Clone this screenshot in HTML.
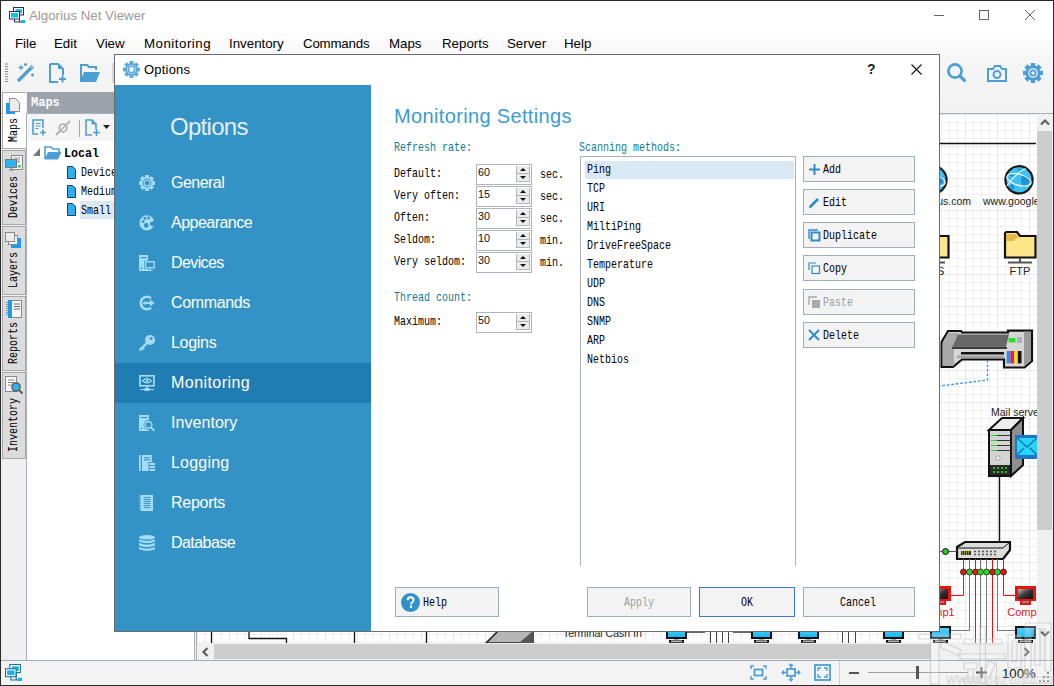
<!DOCTYPE html>
<html><head><meta charset="utf-8">
<style>
*{margin:0;padding:0;box-sizing:border-box}
html,body{width:1054px;height:686px;overflow:hidden;background:#fff}
body{position:relative;font-family:"Liberation Sans",sans-serif;font-size:13px;color:#000}
.a{position:absolute}
svg{position:absolute;overflow:visible}
.mono{font-family:"Liberation Mono",monospace;font-size:12px;letter-spacing:-1.2px;white-space:pre}
#top{left:0;top:0;width:1054px;height:113px;background:linear-gradient(#fff 0px,#fff 28px,#f5f5f5 62px,#f2f2f2 112px)}
.menu span{position:absolute;top:36px;font-size:13.3px;color:#000;line-height:16px}
#tbline{left:0;top:113px;width:1054px;height:1px;background:#a7b2bf}
#strip{left:0;top:114px;width:27px;height:547px;background:#f0f0f0;border-right:1px solid #a9b0b8}
.tab{position:absolute;left:2px;width:24px;background:#dcdcdc;border:1px solid #a8a8a8}
.tab.sel{background:#fff}
.vt{position:absolute;font-family:"Liberation Mono",monospace;font-size:13px;line-height:14px;white-space:pre;transform-origin:0 0;transform:rotate(-90deg) scaleX(0.769)}
#tree{left:27px;top:114px;width:167px;height:546px;background:#fff}
#mapshdr{left:27px;top:92px;width:170px;height:21px;background:#9ca3ab}
#canvas{left:197px;top:114px;width:840px;height:529px;background-color:#fff;
 background-image:linear-gradient(90deg,#e9e9e9 1px,transparent 1px),linear-gradient(#e9e9e9 1px,transparent 1px),linear-gradient(90deg,#f2f2f2 1px,transparent 1px),linear-gradient(#f2f2f2 1px,transparent 1px);
 background-size:32px 32px,32px 32px,8px 8px,8px 8px;background-position:0px 0px;overflow:hidden}
#status{left:0;top:660px;width:1054px;height:26px;background:#f3f3f3;border-top:1px solid #9fabb8}
#dlg{left:114px;top:54px;width:826px;height:578px;border:1px solid #6b6b6b;background:#fff}
#side{left:0;top:30px;width:256px;height:546px;background:#3393c7}
.nav{position:absolute;left:0;width:256px;height:40px;color:#fff;font-size:16px;letter-spacing:-0.45px}
.nav span{position:absolute;left:56px;top:11px;line-height:18px}
.nav.sel{background:#1f7db3}
.nav svg{left:24px;top:12px}
.btn{position:absolute;background:#f3f3f3;border:1px solid #a3acb9}
.lbl{position:absolute;font-family:"Liberation Mono",monospace;font-size:13px;white-space:pre;line-height:14px;transform:scaleX(0.769);transform-origin:0 0}
.teal{color:#0c7d8e}
.spin{position:absolute;left:361px;width:56px;height:21px;border:1px solid #aeb4bb;background:#fff}
.spin b{position:absolute;left:1px;top:1px;font-weight:normal;font-size:10.8px;line-height:12px;color:#111}
.spin i{position:absolute;left:39px;top:1px;width:14px;height:16px;background:linear-gradient(#ececec 0,#ececec 7px,#b4b4b4 7px,#b4b4b4 8px,#ececec 8px);border:1px solid #b8b8b8;border-top:none}
.spin i:before{content:"";position:absolute;left:3px;top:2px;border-left:3px solid transparent;border-right:3px solid transparent;border-bottom:3px solid #111}
.spin i:after{content:"";position:absolute;left:3px;top:10px;border-left:3px solid transparent;border-right:3px solid transparent;border-top:3px solid #111}
.spin i b{display:none}
</style></head><body>
<!-- ========== MAIN WINDOW ========== -->
<div id="top" class="a"></div>
<!-- app icon -->
<svg style="left:9px;top:7px" width="16" height="16" viewBox="0 0 16 16">
 <rect x="4.5" y="0.5" width="10" height="7.5" fill="#fff" stroke="#3e1f6a" stroke-width="1"/>
 <rect x="6.5" y="2.2" width="6.5" height="4.2" fill="#00c6e6"/>
 <rect x="0.5" y="4.5" width="10" height="7.5" fill="#fff" stroke="#3e1f6a" stroke-width="1"/>
 <rect x="2" y="6" width="7" height="4.5" fill="#00c6e6"/>
 <path d="M5.5 12v3h8M10.5 8v7" fill="none" stroke="#3e1f6a" stroke-width="1"/>
 <rect x="12" y="13" width="4" height="3" fill="#00c6e6"/>
</svg>
<div class="a" style="left:29px;top:8px;color:#9a9a9a;font-size:13.3px;line-height:16px">Algorius Net Viewer</div>
<!-- window controls -->
<svg style="left:934px;top:10px" width="102" height="11">
 <path d="M0 5.5h10" stroke="#666" stroke-width="1"/>
 <rect x="45.5" y="0.5" width="9" height="9" fill="none" stroke="#666" stroke-width="1"/>
 <path d="M91 0l10 10M101 0l-10 10" stroke="#666" stroke-width="1"/>
</svg>
<div class="menu">
 <span style="left:15px">File</span><span style="left:54px">Edit</span><span style="left:96px">View</span><span style="left:144px;letter-spacing:0.5px">Monitoring</span><span style="left:229px">Inventory</span><span style="left:303px;letter-spacing:-0.2px">Commands</span><span style="left:389px">Maps</span><span style="left:442px">Reports</span><span style="left:507px">Server</span><span style="left:564px">Help</span>
</div>
<!-- toolbar left -->
<svg style="left:5px;top:63px" width="4" height="20"><path d="M0 1h3M0 3.5h3M0 6h3M0 8.5h3M0 11h3M0 13.5h3M0 16h3M0 18.5h3" stroke="#8a8a8a" stroke-width="1"/></svg>
<svg style="left:16px;top:63px" width="21" height="20" viewBox="0 0 21 20">
 <path d="M2 18L17 3" stroke="#4a9fd5" stroke-width="3.2"/>
 <path d="M15 5l2-2" stroke="#fff" stroke-width="1"/>
 <path d="M2.5 4.5h5M5 2v5M8 1.5h3M9.5 0v3M15 12h3M16.5 10.5v3" stroke="#4a9fd5" stroke-width="1.3"/>
</svg>
<svg style="left:49px;top:63px" width="18" height="20" viewBox="0 0 18 20">
 <path d="M1 1h8l5 5v6M9 19H1V1" fill="none" stroke="#4a9fd5" stroke-width="2"/>
 <path d="M9 1v5h5z" fill="#4a9fd5"/>
 <path d="M10 16h7M13.5 12.5v7" stroke="#4a9fd5" stroke-width="2"/>
</svg>
<svg style="left:80px;top:64px" width="20" height="18" viewBox="0 0 20 18">
 <path d="M1 17V1h6l2 2h7v3" fill="none" stroke="#4a9fd5" stroke-width="2"/>
 <path d="M0 18L4 8h16l-4 10z" fill="#4a9fd5"/>
</svg>
<div class="a" style="left:112px;top:63px;width:3px;height:20px;background:#d8d8d8"></div>
<!-- toolbar right -->
<svg style="left:947px;top:63px" width="20" height="20" viewBox="0 0 20 20">
 <circle cx="8" cy="8" r="6.6" fill="none" stroke="#4a9fd5" stroke-width="2.6"/>
 <path d="M12.6 12.6l5.8 5.8" stroke="#4a9fd5" stroke-width="3.2"/>
</svg>
<svg style="left:987px;top:65px" width="20" height="17" viewBox="0 0 20 17">
 <path d="M1 4h5l2-3h5l2 3h4v12H1z" fill="none" stroke="#4a9fd5" stroke-width="2"/>
 <circle cx="10" cy="9.5" r="3.5" fill="none" stroke="#4a9fd5" stroke-width="2"/>
</svg>
<svg style="left:1023px;top:63px" width="20" height="20" viewBox="0 0 20 20">
 <g fill="#4a9fd5"><rect x="7.8" y="0" width="4.4" height="20"/><rect x="0" y="7.8" width="20" height="4.4"/>
 <rect x="7.8" y="0" width="4.4" height="20" transform="rotate(45 10 10)"/><rect x="7.8" y="0" width="4.4" height="20" transform="rotate(-45 10 10)"/></g>
 <circle cx="10" cy="10" r="7.4" fill="#4a9fd5"/>
 <circle cx="10" cy="10" r="4.8" fill="#f3f3f3"/>
 <circle cx="10" cy="10" r="3.6" fill="#4a9fd5"/>
 <circle cx="10" cy="10" r="1.8" fill="#f3f3f3"/>
</svg>
<div id="tbline" class="a"></div>

<!-- canvas -->
<div id="canvas" class="a">
<svg style="left:0;top:0" width="840" height="529" viewBox="0 0 840 529">
<defs><linearGradient id="scr" x1="0" y1="0" x2="1" y2="1"><stop offset="0" stop-color="#bbb"/><stop offset="0.5" stop-color="#333"/><stop offset="1" stop-color="#111"/></linearGradient><linearGradient id="mon" x1="0" y1="0" x2="0" y2="1"><stop offset="0" stop-color="#4fd4ff"/><stop offset="1" stop-color="#17b8ef"/></linearGradient></defs>
<path d="M600 29.5H839" stroke="#111" stroke-width="1.6"/>
<circle cx="736" cy="65.8" r="13.6" fill="#3cc3f4" stroke="#1a1a1a" stroke-width="2.2"/><path d="M738 63.8c2-3 6-3 8 0 1 3 0 6-3 8-2 1-4-1-5-3zM728 69.8c2 0 4 2 3 5-1 1-3 1-4-1zM734 54.8c3-1 6 0 6 2-2 1-4 1-6-2zM726 60.8c2-2 4-1 5 1-2 1-4 1-5-1z" fill="#2390d6"/><ellipse cx="736" cy="65.8" rx="12.5" ry="5.5" fill="none" stroke="#fff" stroke-width="1.1" transform="rotate(15 736 65.8)"/><path d="M724 71.8C730 62.8 738 55.8 743 54.8" fill="none" stroke="#fff" stroke-width="1.1"/>
<circle cx="822" cy="65.8" r="13.6" fill="#3cc3f4" stroke="#1a1a1a" stroke-width="2.2"/><path d="M824 63.8c2-3 6-3 8 0 1 3 0 6-3 8-2 1-4-1-5-3zM814 69.8c2 0 4 2 3 5-1 1-3 1-4-1zM820 54.8c3-1 6 0 6 2-2 1-4 1-6-2zM812 60.8c2-2 4-1 5 1-2 1-4 1-5-1z" fill="#2390d6"/><ellipse cx="822" cy="65.8" rx="12.5" ry="5.5" fill="none" stroke="#fff" stroke-width="1.1" transform="rotate(15 822 65.8)"/><path d="M810 71.8C816 62.8 824 55.8 829 54.8" fill="none" stroke="#fff" stroke-width="1.1"/>
<text x="774" y="91" font-family="Liberation Sans" font-size="10.5" text-anchor="end" fill="#222">www.algorius.com</text>
<text x="786" y="91" font-family="Liberation Sans" font-size="10.5" fill="#222">www.google.com</text>
<path d="M721 120q0-2 2-2h10l3 4h15.5v21.5h-30.5z" fill="#fde68a" stroke="#111" stroke-width="2.2"/><path d="M722 120h10l3 4h-3l-2 3h-8z" fill="#e3b94e"/><path d="M736 144v4M724 148.5h24" stroke="#555" stroke-width="2"/>
<path d="M808 120q0-2 2-2h10l3 4h15.5v21.5h-30.5z" fill="#fde68a" stroke="#111" stroke-width="2.2"/><path d="M809 120h10l3 4h-3l-2 3h-8z" fill="#e3b94e"/><path d="M823 144v4M811 148.5h24" stroke="#555" stroke-width="2"/>
<text x="736" y="161" font-family="Liberation Sans" font-size="11" text-anchor="middle" fill="#222">NAS</text>
<text x="823" y="161" font-family="Liberation Sans" font-size="11" text-anchor="middle" fill="#222">FTP</text>
<path d="M744.6 253V228L751 217H764L765 218.5H811V216.6H835V247L827.5 253.5H807V245.5H765L756 253z" fill="#d6d6d6" stroke="#111" stroke-width="2.2"/>
<path d="M745.5 252V230L751 219H762L757 228V252z" fill="#a9a9a9"/>
<path d="M760.8 220.5H812L809 232.7H755.5z" fill="#676767"/>
<path d="M755 232.7H810V235H755z" fill="#3d3d3d"/>
<path d="M764 238H807V240.5H764z" fill="#111"/><path d="M760 241.5H807V244H760z" fill="#a4a4a4"/>
<path d="M827 217.5L834 217.5V246L827 252z" fill="#9a9a9a"/>
<rect x="811.5" y="224" width="7" height="4.4" fill="#22e622"/>
<path d="M820 224h5M820 226h5M820 228h5" stroke="#888" stroke-width="1"/>
<path d="M809.7 237h3.7v12.4h-3.7z" fill="#1a9ae0"/><path d="M813.4 237h3.7v12.4h-3.7z" fill="#e0157a"/><path d="M817.1 237h3.7v12.4h-3.7z" fill="#ffe000"/><path d="M820.8 237h3.7v12.4h-3.7z" fill="#111"/>
<path d="M790.5 246V266L600 290" fill="none" stroke="#1e90ff" stroke-width="1.3" stroke-dasharray="2.5 2"/>
<text x="794" y="301.5" font-family="Liberation Sans" font-size="10.5" fill="#222">Mail server</text>
<path d="M792 316l13-12h21l-12 12z" fill="#ededed" stroke="#111" stroke-width="2"/>
<path d="M814 316l12-12v47l-12 11z" fill="#8f8f8f" stroke="#111" stroke-width="2"/>
<rect x="792" y="316" width="22" height="46" fill="#d4d4d4" stroke="#111" stroke-width="2"/>
<path d="M794 321.5h20M794 326.5h20M794 331.5h20M794 336.5h20" stroke="#333" stroke-width="1"/>
<path d="M794 321.5h6M794 326.5h6M794 331.5h6M794 336.5h6" stroke="#22dd22" stroke-width="1"/>
<circle cx="801" cy="344" r="2.2" fill="#eee" stroke="#999" stroke-width="0.8"/>
<rect x="793" y="351" width="20" height="10" fill="#2a2a2a"/>
<path d="M796 354h2M800 354h2M804 354h2M808 354h2M796 358h2M800 358h2M804 358h2M808 358h2" stroke="#22ee22" stroke-width="1.6"/>
<rect x="818" y="321" width="22" height="24" fill="#1b76c4"/><rect x="820" y="324" width="20" height="17" fill="#23d6f5"/>
<path d="M820 324l10 9 10-9M820 341l7-7M840 341l-7-7" fill="none" stroke="#1b76c4" stroke-width="1.6"/>
<path d="M802.5 362V429" stroke="#111" stroke-width="1.4"/>
<path d="M760 433l8-5h45v8l-7 9h-46z" fill="#dcdcdc" stroke="#111" stroke-width="2.2"/>
<path d="M760 434h46l7-6" fill="none" stroke="#111" stroke-width="1"/>
<path d="M764 437h10v4h-10z" fill="#333"/><path d="M765 438h1M767 438h1M769 438h1M771 438h1M765 440h1M767 440h1M769 440h1M771 440h1" stroke="#dede22" stroke-width="1"/>
<path d="M777 437.5h2M781 437.5h2M785 437.5h2M789 437.5h2M793 437.5h2M797 437.5h2M777 440.5h2M781 440.5h2M785 440.5h2M789 440.5h2M793 440.5h2M797 440.5h2" stroke="#555" stroke-width="1.6"/>
<path d="M600 437.5H760" stroke="#555" stroke-width="1"/>
<circle cx="748.5" cy="437.5" r="3" fill="#22cc22" stroke="#111" stroke-width="1"/>
<path d="M766.5 445V481.5H742" fill="none" stroke="#ee1111" stroke-width="1"/>
<path d="M806.5 445V481.5H818" fill="none" stroke="#ee1111" stroke-width="1"/>
<path d="M772.5 445V516.5H600" fill="none" stroke="#777" stroke-width="1"/>
<path d="M800.5 445V516.5H839" fill="none" stroke="#777" stroke-width="1"/>
<path d="M778.5 445V529" stroke="#ee1111" stroke-width="1"/>
<path d="M795.5 445V529" stroke="#ee1111" stroke-width="1"/>
<path d="M783.5 445V529" stroke="#777" stroke-width="1"/>
<path d="M789.5 445V529" stroke="#777" stroke-width="1"/>
<circle cx="766.5" cy="458" r="3" fill="#ee1111" stroke="#222" stroke-width="0.8"/>
<circle cx="772.5" cy="458" r="3" fill="#22dd22" stroke="#222" stroke-width="0.8"/>
<circle cx="778.5" cy="458" r="3" fill="#ee1111" stroke="#222" stroke-width="0.8"/>
<circle cx="783.5" cy="458" r="3" fill="#22dd22" stroke="#222" stroke-width="0.8"/>
<circle cx="789.5" cy="458" r="3" fill="#22dd22" stroke="#222" stroke-width="0.8"/>
<circle cx="795.5" cy="458" r="3" fill="#ee1111" stroke="#222" stroke-width="0.8"/>
<circle cx="800.5" cy="458" r="3" fill="#22dd22" stroke="#222" stroke-width="0.8"/>
<circle cx="806.5" cy="458" r="3" fill="#ee1111" stroke="#222" stroke-width="0.8"/>
<rect x="733" y="472" width="21" height="15" fill="#ee1111"/><rect x="736" y="475" width="15" height="10" fill="url(#scr)"/><rect x="738" y="487" width="11" height="4" fill="#ee1111"/><rect x="740" y="487" width="7" height="2" fill="#888"/>
<rect x="818" y="472" width="21" height="15" fill="#ee1111"/><rect x="821" y="475" width="15" height="10" fill="url(#scr)"/><rect x="823" y="487" width="11" height="4" fill="#ee1111"/><rect x="825" y="487" width="7" height="2" fill="#888"/>
<text x="740" y="502" font-family="Liberation Sans" font-size="11" text-anchor="middle" fill="#ee1111">Comp1</text>
<text x="828" y="502" font-family="Liberation Sans" font-size="11" text-anchor="middle" fill="#ee1111">Comp2</text>
<rect x="469.0" y="512" width="21" height="13" fill="#111"/><rect x="471.0" y="514" width="17" height="9" fill="url(#mon)"/><rect x="477.0" y="525" width="5" height="1.5" fill="#aaa"/><rect x="472.0" y="526" width="15" height="2.8" fill="#111"/><rect x="474.0" y="526.6" width="11" height="1.1" fill="#f4f4f4"/>
<rect x="554.0" y="512" width="21" height="13" fill="#111"/><rect x="556.0" y="514" width="17" height="9" fill="url(#mon)"/><rect x="562.0" y="525" width="5" height="1.5" fill="#aaa"/><rect x="557.0" y="526" width="15" height="2.8" fill="#111"/><rect x="559.0" y="526.6" width="11" height="1.1" fill="#f4f4f4"/>
<rect x="601.0" y="512" width="21" height="13" fill="#111"/><rect x="603.0" y="514" width="17" height="9" fill="url(#mon)"/><rect x="609.0" y="525" width="5" height="1.5" fill="#aaa"/><rect x="604.0" y="526" width="15" height="2.8" fill="#111"/><rect x="606.0" y="526.6" width="11" height="1.1" fill="#f4f4f4"/>
<rect x="686.0" y="512" width="21" height="13" fill="#111"/><rect x="688.0" y="514" width="17" height="9" fill="url(#mon)"/><rect x="694.0" y="525" width="5" height="1.5" fill="#aaa"/><rect x="689.0" y="526" width="15" height="2.8" fill="#111"/><rect x="691.0" y="526.6" width="11" height="1.1" fill="#f4f4f4"/>
<rect x="733.0" y="512" width="21" height="13" fill="#111"/><rect x="735.0" y="514" width="17" height="9" fill="url(#mon)"/><rect x="741.0" y="525" width="5" height="1.5" fill="#aaa"/><rect x="736.0" y="526" width="15" height="2.8" fill="#111"/><rect x="738.0" y="526.6" width="11" height="1.1" fill="#f4f4f4"/>
<rect x="818.0" y="512" width="21" height="13" fill="#111"/><rect x="820.0" y="514" width="17" height="9" fill="url(#mon)"/><rect x="826.0" y="525" width="5" height="1.5" fill="#aaa"/><rect x="821.0" y="526" width="15" height="2.8" fill="#111"/><rect x="823.0" y="526.6" width="11" height="1.1" fill="#f4f4f4"/>
<path d="M14.5 500V529" stroke="#111" stroke-width="1.3"/>
<path d="M157.5 500V529" stroke="#111" stroke-width="1.3"/>
<path d="M229.5 500V529" stroke="#111" stroke-width="1.3"/>
<path d="M52 500V524.5H89.5V529" fill="none" stroke="#111" stroke-width="1.3"/>
<path d="M289 529l12-12h35v12z" fill="#b5b5b5" stroke="#222" stroke-width="1.6"/><path d="M322 529l14-12v12z" fill="#555"/>
<text x="366" y="522.5" font-family="Liberation Sans" font-size="10.5" fill="#222">Terminal Cash In</text>
<path d="M513.5 490V529" stroke="#444" stroke-width="1"/>
<path d="M519.5 490V529" stroke="#444" stroke-width="1"/>
<path d="M525.5 490V529" stroke="#444" stroke-width="1"/>
<path d="M531.5 490V529" stroke="#444" stroke-width="1"/>
<path d="M645.5 490V529" stroke="#444" stroke-width="1"/>
<path d="M651.5 490V529" stroke="#444" stroke-width="1"/>
<path d="M658.5 490V529" stroke="#444" stroke-width="1"/>
<path d="M490 518.5H508M536 518.5H554" stroke="#666" stroke-width="1"/>
</svg>
</div>
<!-- scrollbars -->
<div class="a" style="left:1037px;top:114px;width:16px;height:530px;background:#f0f0f0"></div>
<div class="a" style="left:1037px;top:131px;width:15px;height:399px;background:#cdcdcd"></div>
<svg style="left:1040px;top:119px" width="10" height="6"><path d="M1 5.5l4-4 4 4" fill="none" stroke="#606060" stroke-width="2.2"/></svg>
<svg style="left:1040px;top:631px" width="10" height="6"><path d="M1 0.5l4 4 4-4" fill="none" stroke="#606060" stroke-width="2.2"/></svg>
<div class="a" style="left:197px;top:643px;width:856px;height:17px;background:#f0f0f0"></div>
<div class="a" style="left:214px;top:644px;width:717px;height:15px;background:#cdcdcd"></div>
<svg style="left:202px;top:647px" width="6" height="10"><path d="M5.5 1L1.5 5l4 4" fill="none" stroke="#606060" stroke-width="2.2"/></svg>
<svg style="left:1024px;top:647px" width="6" height="10"><path d="M0.5 1l4 4-4 4" fill="none" stroke="#606060" stroke-width="2.2"/></svg>

<!-- left tab strip -->
<div id="strip" class="a">
 <div class="tab sel" style="top:-22px;height:57px"></div>
</div>

<!-- tabs -->
<div class="a" style="left:2px;top:92px;width:24px;height:57px;background:#fff;border:1px solid #a8a8a8;border-right:none"></div>
<div class="a" style="left:2px;top:150px;width:24px;height:75px;background:#dcdcdc;border:1px solid #a8a8a8"></div>
<div class="a" style="left:2px;top:226px;width:24px;height:69px;background:#dcdcdc;border:1px solid #a8a8a8"></div>
<div class="a" style="left:2px;top:296px;width:24px;height:75px;background:#dcdcdc;border:1px solid #a8a8a8"></div>
<div class="a" style="left:2px;top:372px;width:24px;height:87px;background:#dcdcdc;border:1px solid #a8a8a8"></div>
<!-- tab icons -->
<svg style="left:6px;top:98px" width="14" height="16" viewBox="0 0 14 16">
 <rect x="0" y="5" width="9" height="11" fill="#1e9be8"/>
 <path d="M3.5 0.5h6l4 4v9h-10z" fill="#ececec" stroke="#8a8a8a" stroke-width="1"/>
</svg>
<svg style="left:5px;top:155px" width="18" height="17" viewBox="0 0 18 17">
 <rect x="6.5" y="0.5" width="11" height="14" fill="#f4f4f4" stroke="#8a8a8a"/>
 <path d="M9 3h6M9 5h6M9 7h6" stroke="#9a9a9a"/>
 <rect x="0.5" y="4.5" width="11" height="8" fill="#2eb3f0" stroke="#7a7a7a"/>
 <path d="M4 15h5M6.5 12.5v2.5" stroke="#7a7a7a"/>
 <rect x="13" y="10" width="2.5" height="2.5" fill="#2ecc40"/>
</svg>
<svg style="left:5px;top:232px" width="16" height="16" viewBox="0 0 16 16">
 <rect x="6" y="6" width="10" height="10" fill="#1e9be8"/>
 <rect x="3.5" y="3.5" width="9" height="9" fill="#f4f4f4" stroke="#8a8a8a"/>
 <rect x="0.5" y="0.5" width="9" height="9" fill="#ececec" stroke="#8a8a8a"/>
</svg>
<svg style="left:6px;top:300px" width="16" height="18" viewBox="0 0 16 18">
 <rect x="2.5" y="0.5" width="13" height="17" fill="#f6f6f6" stroke="#8a8a8a"/>
 <rect x="2" y="0" width="4" height="18" fill="#1e9be8"/>
 <path d="M8 4h6M8 6.5h6M8 9h6" stroke="#6a6a6a"/>
 <path d="M1 2v14" stroke="#444" stroke-dasharray="1 1"/>
</svg>
<svg style="left:5px;top:376px" width="18" height="18" viewBox="0 0 18 18">
 <rect x="0.5" y="0.5" width="11" height="15" fill="#f6f6f6" stroke="#8a8a8a"/>
 <path d="M3 4h6M3 6.5h6M3 9h3" stroke="#8a8a8a"/>
 <circle cx="11" cy="11" r="4.2" fill="#2eb3f0" stroke="#555" stroke-width="1.2"/>
 <path d="M14 14l3.5 3.5" stroke="#555" stroke-width="1.8"/>
</svg>
<!-- tab labels -->
<div class="vt" style="left:7px;top:142px">Maps</div>
<div class="vt" style="left:7px;top:218px">Devices</div>
<div class="vt" style="left:7px;top:288px">Layers</div>
<div class="vt" style="left:7px;top:364px">Reports</div>
<div class="vt" style="left:7px;top:452px">Inventory</div>

<!-- tree panel -->
<div id="tree" class="a"></div>
<div class="a" style="left:194px;top:114px;width:3px;height:546px;background:#f0f0f0;border-left:1px solid #a9b0b8;border-right:1px solid #a9b0b8"></div>
<div id="mapshdr" class="a"></div>

<div class="a" style="left:31px;top:96px;color:#fff;font-family:'Liberation Mono',monospace;font-weight:bold;font-size:12px;line-height:14px">Maps</div>
<div class="a" style="left:27px;top:114px;width:167px;height:27px;background:#f5f5f5"></div>
<svg style="left:32px;top:119px" width="14" height="17" viewBox="0 0 14 17">
 <path d="M6 15H1V1h10v8" fill="none" stroke="#4a9fd5" stroke-width="1.6"/>
 <path d="M3.5 4.5h5M3.5 7h5M3.5 9.5h3" stroke="#4a9fd5" stroke-width="1.2"/>
 <path d="M8 13.5h6M11 10.5v6" stroke="#4a9fd5" stroke-width="1.6"/>
</svg>
<svg style="left:55px;top:120px" width="16" height="16" viewBox="0 0 16 16">
 <path d="M1 15l4-4M11 5l4-4" stroke="#b0b0b0" stroke-width="1.8"/>
 <circle cx="8" cy="8" r="3.8" fill="none" stroke="#b0b0b0" stroke-width="1.8"/>
 <path d="M5.5 10.5l5-5" stroke="#b0b0b0" stroke-width="1.6"/>
</svg>
<div class="a" style="left:79px;top:120px;width:1px;height:17px;background:#a8a8a8"></div>
<svg style="left:85px;top:119px" width="15" height="17" viewBox="0 0 15 17">
 <path d="M7 16H1V1h6l4 4v5" fill="none" stroke="#4a9fd5" stroke-width="1.6"/>
 <path d="M7 1v4h4" fill="#4a9fd5" stroke="#4a9fd5" stroke-width="1"/>
 <path d="M8 13.5h7M11.5 10v7" stroke="#4a9fd5" stroke-width="1.6"/>
</svg>
<svg style="left:103px;top:125px" width="7" height="4"><path d="M0 0h7L3.5 4z" fill="#222"/></svg>
<!-- tree -->
<svg style="left:33px;top:148px" width="7" height="8"><path d="M7 0v8H0z" fill="#777"/></svg>
<svg style="left:44px;top:146px" width="18" height="14" viewBox="0 0 18 14">
 <path d="M1 13V1h6l2 2h6v3" fill="none" stroke="#4a9fd5" stroke-width="1.6"/>
 <path d="M0.5 13.5L4 6h13.5l-3.5 7.5z" fill="#4a9fd5"/>
</svg>
<div class="lbl" style="left:64px;top:147px;font-weight:bold;transform:scaleX(0.9)">Local</div>
<div class="a" style="left:80px;top:201px;width:114px;height:18px;background:#dae8f5"></div>
<svg style="left:67px;top:166px" width="9" height="13" viewBox="0 0 9 13"><path d="M0.5 0.5h5l3 3v9h-8z" fill="#2eaef0" stroke="#0f3f66" stroke-width="1"/></svg>
<svg style="left:67px;top:185px" width="9" height="13" viewBox="0 0 9 13"><path d="M0.5 0.5h5l3 3v9h-8z" fill="#2eaef0" stroke="#0f3f66" stroke-width="1"/></svg>
<svg style="left:67px;top:203px" width="9" height="13" viewBox="0 0 9 13"><path d="M0.5 0.5h5l3 3v9h-8z" fill="#2eaef0" stroke="#0f3f66" stroke-width="1"/></svg>
<div class="lbl" style="left:81px;top:166px">Devices</div>
<div class="lbl" style="left:81px;top:185px">Medium</div>
<div class="lbl" style="left:81px;top:204px">Small</div>


<!-- status bar -->
<div id="status" class="a"></div>

<svg style="left:5px;top:664px" width="17" height="17" viewBox="0 0 16 16">
 <rect x="4.5" y="0.5" width="10" height="7.5" fill="#fff" stroke="#1a6f9a" stroke-width="1"/>
 <rect x="6.5" y="2.2" width="6.5" height="4.2" fill="#1ab0e0"/>
 <rect x="0.5" y="4.5" width="10" height="7.5" fill="#fff" stroke="#1a6f9a" stroke-width="1"/>
 <rect x="2" y="6" width="7" height="4.5" fill="#1ab0e0"/>
 <path d="M5.5 12v3h8M10.5 8v7" fill="none" stroke="#1a6f9a" stroke-width="1"/>
 <rect x="12" y="13" width="4" height="3" fill="#1ab0e0"/>
</svg>
<svg style="left:750px;top:665px" width="17" height="15" viewBox="0 0 17 15">
 <path d="M1 4V1h3M13 1h3v3M16 11v3h-3M4 14H1v-3" fill="none" stroke="#4a9fd5" stroke-width="1.5"/>
 <rect x="4.5" y="4.5" width="8" height="6" fill="none" stroke="#4a9fd5" stroke-width="1.8"/>
</svg>
<svg style="left:782px;top:664px" width="18" height="17" viewBox="0 0 18 17">
 <rect x="5" y="5" width="8" height="7" fill="none" stroke="#4a9fd5" stroke-width="1.8"/>
 <path d="M9 0v4M9 13v4M0 8.5h4M14 8.5h4" stroke="#4a9fd5" stroke-width="1.5"/>
 <path d="M7 2l2-2 2 2M7 15l2 2 2-2M2 6.5L0 8.5l2 2M16 6.5l2 2-2 2" fill="none" stroke="#4a9fd5" stroke-width="1.2"/>
</svg>
<svg style="left:814px;top:664px" width="17" height="17" viewBox="0 0 17 17">
 <rect x="1" y="1" width="15" height="15" fill="none" stroke="#4a9fd5" stroke-width="1.8"/>
 <path d="M4 7V4h3M10 4h3v3M13 10v3h-3M7 13H4v-3" fill="none" stroke="#4a9fd5" stroke-width="1.4"/>
</svg>
<div class="a" style="left:839px;top:661px;width:1px;height:24px;background:#d0d0d0"></div>
<div class="a" style="left:849px;top:672px;width:10px;height:2px;background:#555"></div>
<div class="a" style="left:868px;top:672px;width:100px;height:1px;background:#a0a0a0"></div>
<div class="a" style="left:916px;top:666px;width:3px;height:13px;background:#555"></div>
<svg style="left:976px;top:667px" width="11" height="11"><path d="M0 5.5h11M5.5 0v11" stroke="#555" stroke-width="1.8"/></svg>
<div class="a" style="left:996px;top:661px;width:1px;height:24px;background:#d0d0d0"></div>
<div class="a" style="left:1002px;top:666px;font-size:13.2px;line-height:15px;color:#111">100%</div>
<svg style="left:1039px;top:672px" width="12" height="12"><g fill="#8a8a8a"><rect x="8" y="0" width="2" height="2"/><rect x="4" y="4" width="2" height="2"/><rect x="8" y="4" width="2" height="2"/><rect x="0" y="8" width="2" height="2"/><rect x="4" y="8" width="2" height="2"/><rect x="8" y="8" width="2" height="2"/></g></svg>


<!-- window border -->
<div class="a" style="left:0;top:0;width:1054px;height:686px;border:1px solid #2a2a2a"></div>

<!-- ========== DIALOG ========== -->
<div id="dlg" class="a">
 <!-- title bar -->
 <svg style="left:8px;top:6px" width="17" height="17" viewBox="0 0 17 17">
  <g fill="#5aa9dc"><rect x="6.6" y="0" width="3.8" height="17"/><rect x="0" y="6.6" width="17" height="3.8"/>
  <rect x="6.6" y="0" width="3.8" height="17" transform="rotate(45 8.5 8.5)"/><rect x="6.6" y="0" width="3.8" height="17" transform="rotate(-45 8.5 8.5)"/></g>
  <circle cx="8.5" cy="8.5" r="6.4" fill="#5aa9dc"/>
  <circle cx="8.5" cy="8.5" r="4.6" fill="#dceefa"/>
  <circle cx="8.5" cy="8.5" r="3.9" fill="#5aa9dc"/>
  <circle cx="8.5" cy="8.5" r="2.4" fill="#fff"/>
 </svg>
 <div class="a" style="left:29px;top:7px;font-size:13px;line-height:16px;letter-spacing:0.2px">Options</div>
 <div class="a" style="left:752px;top:6px;font-size:14px;line-height:16px;font-weight:bold;color:#222">?</div>
 <svg style="left:796px;top:9px" width="11" height="11"><path d="M0.5 0.5l10 10M10.5 0.5l-10 10" stroke="#111" stroke-width="1.1"/></svg>
 <!-- sidebar -->
 <div id="side" class="a">
  <div class="a" style="left:55px;top:28px;color:rgba(255,255,255,0.88);font-size:24px;letter-spacing:-0.7px;line-height:28px">Options</div>
  <div class="nav" style="top:78px"><svg width="16" height="16" viewBox="0 0 16 16"><g fill="#a6dbf4"><rect x="6.1" y="0" width="3.8" height="16"/><rect x="0" y="6.1" width="16" height="3.8"/><rect x="6.1" y="0" width="3.8" height="16" transform="rotate(45 8 8)"/><rect x="6.1" y="0" width="3.8" height="16" transform="rotate(-45 8 8)"/></g><circle cx="8" cy="8" r="6.2" fill="#a6dbf4"/><circle cx="8" cy="8" r="4.4" fill="#3393c7"/><circle cx="8" cy="8" r="3.5" fill="#a6dbf4"/><circle cx="8" cy="8" r="2.3" fill="#3393c7"/></svg><span style="letter-spacing:-0.52px">General</span></div>
  <div class="nav" style="top:118px"><svg width="16" height="16" viewBox="0 0 16 16"><path d="M15.2 5.5A7.6 7.6 0 1 0 14.6 11.6L11.6 10.2C10.4 9.4 10.6 7.6 12 7z" fill="#a6dbf4"/><circle cx="4" cy="6.6" r="1.4" fill="#3393c7"/><circle cx="6" cy="3.4" r="1.4" fill="#3393c7"/><circle cx="9.6" cy="3" r="1.4" fill="#3393c7"/><circle cx="7.2" cy="10.4" r="2.3" fill="#3393c7"/></svg><span style="letter-spacing:-0.52px">Appearance</span></div>
  <div class="nav" style="top:158px"><svg width="16" height="16" viewBox="0 0 16 16"><rect x="0" y="0" width="9" height="16" fill="#a6dbf4"/><rect x="1.5" y="2" width="6" height="1.2" fill="#3393c7"/><rect x="1.5" y="12.5" width="2" height="1.2" fill="#3393c7"/><rect x="5.2" y="5.6" width="11" height="8.4" fill="#3393c7"/><rect x="6.6" y="6.8" width="8.6" height="6" fill="none" stroke="#a6dbf4" stroke-width="1.4"/><rect x="10.2" y="13.6" width="1.4" height="1.6" fill="#a6dbf4"/><rect x="8.2" y="15" width="5.4" height="1" fill="#a6dbf4"/></svg><span style="letter-spacing:-0.6px">Devices</span></div>
  <div class="nav" style="top:198px"><svg width="16" height="16" viewBox="0 0 16 16"><path d="M12 3.3A6.2 6.2 0 1 0 12 12.7" fill="none" stroke="#a6dbf4" stroke-width="2.6"/><path d="M5.5 8h7" stroke="#a6dbf4" stroke-width="2.2"/><path d="M11 4.6L15.6 8 11 11.4z" fill="#a6dbf4"/><circle cx="5.6" cy="8" r="1.6" fill="#a6dbf4"/></svg><span style="letter-spacing:-0.35px">Commands</span></div>
  <div class="nav" style="top:238px"><svg width="16" height="16" viewBox="0 0 16 16"><circle cx="11" cy="5" r="5" fill="#a6dbf4"/><circle cx="12.2" cy="3.6" r="1.4" fill="#3393c7"/><path d="M8.6 7.4L1.4 14.6" stroke="#a6dbf4" stroke-width="2.6" stroke-linecap="round"/><path d="M3.4 12.6l1.8 1.8" stroke="#a6dbf4" stroke-width="1.8"/></svg><span style="letter-spacing:-0.3px">Logins</span></div>
  <div class="nav sel" style="top:278px"><svg width="16" height="16" viewBox="0 0 16 16"><rect x="1" y="0.8" width="14" height="10" fill="none" stroke="#a6dbf4" stroke-width="1.7"/><path d="M3.6 5.8Q8 1.6 12.4 5.8Q8 10 3.6 5.8z" fill="none" stroke="#a6dbf4" stroke-width="1.2"/><circle cx="8" cy="5.8" r="1.2" fill="#a6dbf4"/><rect x="7.3" y="11" width="1.4" height="2.4" fill="#a6dbf4"/><rect x="1" y="14" width="14" height="1" fill="#a6dbf4"/><rect x="5.4" y="13" width="5.2" height="3" fill="#a6dbf4"/></svg><span style="letter-spacing:0.45px">Monitoring</span></div>
  <div class="nav" style="top:318px"><svg width="16" height="16" viewBox="0 0 16 16"><rect x="0" y="0" width="10" height="16" fill="#a6dbf4"/><rect x="1.5" y="2" width="7" height="1.1" fill="#3393c7"/><rect x="1.5" y="12.8" width="2" height="1.1" fill="#3393c7"/><circle cx="9.6" cy="10" r="5" fill="#3393c7"/><circle cx="9.4" cy="9.8" r="3.4" fill="none" stroke="#a6dbf4" stroke-width="1.5"/><path d="M11.8 12.2l3.6 3.6" stroke="#a6dbf4" stroke-width="1.8"/></svg><span style="letter-spacing:0.05px">Inventory</span></div>
  <div class="nav" style="top:358px"><svg width="16" height="16" viewBox="0 0 16 16"><rect x="0" y="0" width="1.8" height="16" fill="#a6dbf4"/><rect x="3" y="0" width="9.8" height="16" fill="#a6dbf4"/><rect x="5" y="2.3" width="5.8" height="1.1" fill="#3393c7"/><rect x="5" y="4.4" width="5.8" height="1.1" fill="#3393c7"/><rect x="9.6" y="7.2" width="6.4" height="8.8" fill="#3393c7"/><rect x="10.6" y="8" width="5.4" height="2" fill="#a6dbf4"/><rect x="10.6" y="11" width="5.4" height="2" fill="#a6dbf4"/><rect x="10.6" y="14" width="5.4" height="2" fill="#a6dbf4"/></svg><span style="letter-spacing:0.2px">Logging</span></div>
  <div class="nav" style="top:398px"><svg width="16" height="16" viewBox="0 0 16 16"><rect x="2" y="0" width="12" height="16" fill="#a6dbf4"/><path d="M4.6 2.6h7M4.6 4.6h7M4.6 6.6h7M4.6 8.6h7M4.6 10.6h7M4.6 12.6h7" stroke="#3393c7" stroke-width="1"/><path d="M1.2 0.5v15" stroke="#a6dbf4" stroke-width="1.4" stroke-dasharray="1.2 0.9"/></svg><span style="letter-spacing:-0.28px">Reports</span></div>
  <div class="nav" style="top:438px"><svg width="16" height="16" viewBox="0 0 16 16"><ellipse cx="8" cy="2.3" rx="8" ry="2.3" fill="#a6dbf4"/><path d="M0 4.3Q8 7.5 16 4.3V6.6Q8 9.8 0 6.6z" fill="#a6dbf4"/><path d="M0 8.1Q8 11.3 16 8.1V10.399999999999999Q8 13.6 0 10.399999999999999z" fill="#a6dbf4"/><path d="M0 11.9Q8 15.100000000000001 16 11.9V14.2Q8 17.4 0 14.2z" fill="#a6dbf4"/></svg><span style="letter-spacing:-0.55px">Database</span></div>
 </div>
 <!-- content -->
 <div class="a" style="left:279px;top:49px;color:#3b9bd6;font-size:20px;letter-spacing:0.35px;line-height:24px">Monitoring Settings</div>
 <div class="lbl teal" style="left:279px;top:86px">Refresh rate:</div>
 <div class="lbl teal" style="left:464px;top:86px">Scanning methods:</div>
 <div class="lbl" style="left:279px;top:112px">Default:</div>
 <div class="lbl" style="left:279px;top:134px">Very often:</div>
 <div class="lbl" style="left:279px;top:156px">Often:</div>
 <div class="lbl" style="left:279px;top:178px">Seldom:</div>
 <div class="lbl" style="left:279px;top:200px">Very seldom:</div>
 <div class="spin" style="top:109px"><b>60</b><i></i></div>
 <div class="spin" style="top:131px"><b>15</b><i></i></div>
 <div class="spin" style="top:153px"><b>30</b><i></i></div>
 <div class="spin" style="top:175px"><b>10</b><i></i></div>
 <div class="spin" style="top:197px"><b>30</b><i></i></div>
 <div class="lbl" style="left:425px;top:113px">sec.</div>
 <div class="lbl" style="left:425px;top:135px">sec.</div>
 <div class="lbl" style="left:425px;top:157px">sec.</div>
 <div class="lbl" style="left:425px;top:179px">min.</div>
 <div class="lbl" style="left:425px;top:201px">min.</div>
 <div class="lbl teal" style="left:279px;top:236px">Thread count:</div>
 <div class="lbl" style="left:279px;top:260px">Maximum:</div>
 <div class="spin" style="top:257px"><b>50</b><i></i></div>
 <!-- list -->
 <div class="a" style="left:465px;top:101px;width:216px;height:410px;border:1px solid #aab2bd;border-bottom:none;background:#fff"></div>
 <div class="a" style="left:470px;top:106px;width:209px;height:18px;background:#d9e8f5"></div>
 <div class="lbl" style="left:472px;top:108px">Ping</div>
 <div class="lbl" style="left:472px;top:127px">TCP</div>
 <div class="lbl" style="left:472px;top:146px">URI</div>
 <div class="lbl" style="left:472px;top:165px">MiltiPing</div>
 <div class="lbl" style="left:472px;top:184px">DriveFreeSpace</div>
 <div class="lbl" style="left:472px;top:203px">Temperature</div>
 <div class="lbl" style="left:472px;top:222px">UDP</div>
 <div class="lbl" style="left:472px;top:241px">DNS</div>
 <div class="lbl" style="left:472px;top:260px">SNMP</div>
 <div class="lbl" style="left:472px;top:279px">ARP</div>
 <div class="lbl" style="left:472px;top:298px">Netbios</div>
 <!-- side buttons -->
 <div class="btn" style="left:688px;top:101px;width:112px;height:26px"></div>
 <svg style="left:693px;top:108px" width="13" height="13" viewBox="0 0 13 13"><path d="M1 6.5h11M6.5 1v11" stroke="#2f8ccb" stroke-width="2"/></svg>
 <div class="lbl" style="left:708px;top:108px">Add</div>
 <div class="btn" style="left:688px;top:134px;width:112px;height:26px"></div>
 <svg style="left:693px;top:141px" width="13" height="13" viewBox="0 0 13 13"><path d="M2 11l8-8" stroke="#2f8ccb" stroke-width="2.6"/><path d="M0.5 12.5l1.5-3 1.5 1.5z" fill="#2f8ccb"/></svg>
 <div class="lbl" style="left:708px;top:141px">Edit</div>
 <div class="btn" style="left:688px;top:167px;width:112px;height:26px"></div>
 <svg style="left:693px;top:174px" width="13" height="13" viewBox="0 0 13 13"><path d="M1 10V1h9" fill="none" stroke="#2f8ccb" stroke-width="1.4"/><rect x="3.5" y="3.5" width="8" height="8" fill="none" stroke="#2f8ccb" stroke-width="2"/></svg>
 <div class="lbl" style="left:708px;top:174px">Duplicate</div>
 <div class="btn" style="left:688px;top:200px;width:112px;height:26px"></div>
 <svg style="left:693px;top:207px" width="13" height="13" viewBox="0 0 13 13"><path d="M1 8V1h7" fill="none" stroke="#2f8ccb" stroke-width="1.2"/><rect x="4" y="4" width="7.5" height="7.5" fill="none" stroke="#2f8ccb" stroke-width="1.2"/></svg>
 <div class="lbl" style="left:708px;top:207px">Copy</div>
 <div class="btn" style="left:688px;top:234px;width:112px;height:26px"></div>
 <svg style="left:693px;top:241px" width="13" height="13" viewBox="0 0 13 13"><path d="M1 9V1h8" fill="none" stroke="#a9a9a9" stroke-width="1.4"/><rect x="4" y="4" width="8" height="8" fill="#a9a9a9"/></svg>
 <div class="lbl" style="left:708px;top:241px;color:#9aa0a6">Paste</div>
 <div class="btn" style="left:688px;top:267px;width:112px;height:26px"></div>
 <svg style="left:693px;top:274px" width="13" height="13" viewBox="0 0 13 13"><path d="M1 1l10 10M11 1L1 11" stroke="#2f8ccb" stroke-width="2"/></svg>
 <div class="lbl" style="left:708px;top:274px">Delete</div>
 <!-- bottom buttons -->
 <div class="btn" style="left:280px;top:532px;width:104px;height:30px"></div>
 <svg style="left:286px;top:538px" width="19" height="19" viewBox="0 0 19 19"><circle cx="9.5" cy="9.5" r="9.5" fill="#3190c9"/>
  <path d="M6.6 7.2C6.6 5.4 8 4.3 9.6 4.3c1.7 0 3 1.1 3 2.7 0 2.2-2.6 2.3-2.6 4.4" fill="none" stroke="#fff" stroke-width="1.9"/><rect x="8.9" y="12.6" width="2.2" height="2.2" fill="#fff"/></svg>
 <div class="lbl" style="left:308px;top:541px">Help</div>
 <div class="btn" style="left:472px;top:532px;width:104px;height:30px"></div>
 <div class="lbl" style="left:509px;top:541px;color:#9aa0a6">Apply</div>
 <div class="btn" style="left:584px;top:532px;width:96px;height:30px;border-color:#3b78c8"></div>
 <div class="lbl" style="left:626px;top:541px">OK</div>
 <div class="btn" style="left:688px;top:532px;width:112px;height:30px"></div>
 <div class="lbl" style="left:725px;top:541px">Cancel</div>

</div>
<svg style="left:880px;top:605px" width="174" height="81" viewBox="0 0 174 81" opacity="0.5">
 <g fill="rgba(255,255,255,0.45)" stroke="#b8b8b8" stroke-width="1.2">
  <path d="M39 29h42v5H39z"/>
  <path d="M50.5 34h8.5v45h-8.5z"/>
  <path d="M63 37l18 8-2.5 5.5-18-8z"/>
  <path d="M84 34h38v5H84zM80 49h45v5H80zM100 22h5.5v58H100zM84 58h13v6H84zM88 64h5v14h-5zM84 73h14v5H84zM109 56l6 3-9 21-6-3z"/>
  <path d="M128 30h13v33h-13zM132 36v21h5V36z"/>
  <path d="M145 18h26v48h-6V24h-14v48h22v6h-28z"/>
  <path d="M155 24h5v36h-5z"/>
 </g>
 <text x="66" y="79" font-family="Liberation Sans" font-size="14.5" fill="rgba(255,255,255,0.35)" stroke="#bcbcbc" stroke-width="0.6" letter-spacing="0.3">www.xiazaiba.com</text>
</svg>
</body></html>
